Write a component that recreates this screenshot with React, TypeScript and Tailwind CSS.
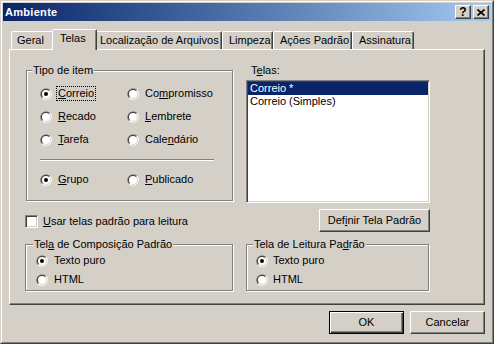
import React from 'react'

function Radio({ checked }: { checked?: boolean }) {
  return (
    <svg width="12" height="12" viewBox="0 0 12 12" className="shrink-0">
      <path d="M1.76 10.24A6 6 0 0 1 10.24 1.76Z" fill="#808080" />
      <path d="M1.76 10.24A6 6 0 0 0 10.24 1.76Z" fill="#ffffff" />
      <path d="M2.46 9.54A5 5 0 0 1 9.54 2.46Z" fill="#404040" />
      <path d="M2.46 9.54A5 5 0 0 0 9.54 2.46Z" fill="#d4d0c8" />
      <circle cx="6" cy="6" r="4" fill="#ffffff" />
      {checked && <circle cx="6" cy="6" r="2" fill="#000000" />}
    </svg>
  )
}

function Option({ checked, focused, children }: { checked?: boolean; focused?: boolean; children: React.ReactNode }) {
  return (
    <div className="flex items-center h-[23px]">
      <Radio checked={checked} />
      <span
        className={`ml-[4px] px-[1px] border leading-[13px] ${
          focused ? 'border-dotted border-black' : 'border-transparent'
        }`}
      >
        {children}
      </span>
    </div>
  )
}

function SmallOption({ checked, gap, children }: { checked?: boolean; gap: string; children: React.ReactNode }) {
  return (
    <div className="flex items-center h-[19px]">
      <Radio checked={checked} />
      <span className={`${gap} leading-[13px]`}>{children}</span>
    </div>
  )
}

function Group({ label, className, legendClass, children }: { label: React.ReactNode; className: string; legendClass: string; children: React.ReactNode }) {
  return (
    <fieldset className={`border border-[#808080] shadow-[inset_1px_1px_0_#fff,1px_1px_0_#fff] ${className}`}>
      <legend className={`${legendClass} px-[1px] leading-[13px] bg-[#d4d0c8]`}>{label}</legend>
      {children}
    </fieldset>
  )
}

function Button({ children, isDefault, className }: { children: React.ReactNode; isDefault?: boolean; className: string }) {
  return (
    <button
      className={`flex items-center justify-center bg-[#d4d0c8] leading-[13px] ${
        isDefault
          ? 'border border-black shadow-[inset_1px_1px_0_#fff,inset_-1px_-1px_0_#404040,inset_-2px_-2px_0_#808080]'
          : 'border border-t-white border-l-white border-r-[#404040] border-b-[#404040] shadow-[inset_-1px_-1px_0_#808080]'
      } ${className}`}
    >
      {children}
    </button>
  )
}

const tabs = [
  { label: 'Geral', w: 'w-[43px]', pl: 'pl-[5px]' },
  { label: 'Telas', w: 'w-[45px]', pl: 'pl-[7px]', selected: true },
  { label: 'Localização de Arquivos', w: 'w-[127px]', pl: 'pl-[4px]' },
  { label: 'Limpeza', w: 'w-[51px]', pl: 'pl-[6px]' },
  { label: 'Ações Padrão', w: 'w-[79px]', pl: 'pl-[6px]' },
  { label: 'Assinatura', w: 'w-[62px]', pl: 'pl-[6px]' },
]

export default function App() {
  return (
    <div className="w-[494px] h-[344px] bg-[#d4d0c8] text-[11px] text-black font-['Liberation_Sans',Arial,sans-serif] border border-t-[#d4d0c8] border-l-[#d4d0c8] border-r-[#404040] border-b-[#404040]">
      <div className="h-full flex flex-col p-[1px] border border-t-white border-l-white border-r-[#808080] border-b-[#808080]">
        {/* Title bar */}
        <div className="h-[18px] shrink-0 flex items-center pl-[2px] pr-[2px] bg-linear-to-r from-[#0a246a] to-[#a6caf0]">
          <span className="font-bold text-white tracking-[0.3px] leading-[13px]">Ambiente</span>
          <div className="ml-auto flex gap-[2px]">
            <div className="w-[16px] h-[14px] flex items-center justify-center border border-t-white border-l-white border-r-[#404040] border-b-[#404040] bg-[#d4d0c8] shadow-[inset_-1px_-1px_0_#808080]">
              <span className="font-bold text-[12px] leading-[12px]">?</span>
            </div>
            <div className="w-[16px] h-[14px] flex items-center justify-center border border-t-white border-l-white border-r-[#404040] border-b-[#404040] bg-[#d4d0c8] shadow-[inset_-1px_-1px_0_#808080]">
              <svg width="8" height="7" viewBox="0 0 8 7">
                <path d="M0.5 0.5L7.5 6.5M7.5 0.5L0.5 6.5" stroke="#000" strokeWidth="1.6" />
              </svg>
            </div>
          </div>
        </div>

        <div className="flex-1 px-[6px] pt-[8px]">
          {/* Tabs */}
          <div className="flex items-end h-[20px] pl-[2px]">
            {tabs.map((t) =>
              t.selected ? (
                <div
                  key={t.label}
                  className={`${t.w} ${t.pl} relative z-10 -mx-[2px] -mb-px h-[21px] pb-[3px] flex items-center bg-[#d4d0c8] rounded-t-[2px] border-t border-l border-r border-t-white border-l-white border-r-[#404040] shadow-[inset_-1px_0_0_#808080]`}
                >
                  <span className="leading-[13px] whitespace-nowrap">{t.label}</span>
                </div>
              ) : (
                <div
                  key={t.label}
                  className={`${t.w} ${t.pl} h-[18px] flex items-center rounded-t-[2px] border-t border-l border-r border-t-white border-l-white border-r-[#404040] shadow-[inset_-1px_0_0_#808080]`}
                >
                  <span className="leading-[13px] whitespace-nowrap">{t.label}</span>
                </div>
              )
            )}
          </div>

          {/* Panel */}
          <div className="h-[256px] pt-[14px] pl-[15px] border border-t-white border-l-white border-r-[#404040] border-b-[#404040] shadow-[inset_-1px_-1px_0_#808080]">
            <div className="grid grid-cols-[209px_184px] gap-x-[12px] gap-y-[6px] items-start">
              <Group label="Tipo de item" legendClass="ml-[5px]" className="ml-[1px] w-[207px] h-[137px]">
                <div className="pt-[5px] pl-[13px]">
                  <div className="grid grid-cols-[87px_auto]">
                    <Option checked focused>
                      <u>C</u>orreio
                    </Option>
                    <Option>
                      Co<u>m</u>promisso
                    </Option>
                    <Option>
                      <u>R</u>ecado
                    </Option>
                    <Option>
                      <u>L</u>embrete
                    </Option>
                    <Option>
                      <u>T</u>arefa
                    </Option>
                    <Option>
                      Cale<u>n</u>dário
                    </Option>
                  </div>
                  <div className="mt-[8px] w-[174px] border-t border-b border-t-[#808080] border-b-white" />
                  <div className="mt-[7px] grid grid-cols-[87px_auto]">
                    <Option checked>
                      <u>G</u>rupo
                    </Option>
                    <Option>
                      <u>P</u>ublicado
                    </Option>
                  </div>
                </div>
              </Group>

              <div>
                <div className="pl-[5px] leading-[13px]">
                  T<u>e</u>las:
                </div>
                <div className="mt-[3px] w-[184px] h-[123px] p-[1px] bg-white border border-t-[#808080] border-l-[#808080] border-r-white border-b-white shadow-[inset_1px_1px_0_#404040,inset_-1px_-1px_0_#d4d0c8]">
                  <div className="h-[13px] leading-[13px] pl-[2px] bg-[#0a246a] text-white">Correio *</div>
                  <div className="h-[13px] leading-[13px] pl-[2px]">Correio (Simples)</div>
                </div>
              </div>

              <div className="h-[23px] pt-[1px] flex items-center">
                <div className="w-[13px] h-[13px] bg-white border border-t-[#808080] border-l-[#808080] border-r-white border-b-white shadow-[inset_1px_1px_0_#404040,inset_-1px_-1px_0_#d4d0c8]" />
                <span className="ml-[5px] leading-[13px]">
                  <u>U</u>sar telas padrão para leitura
                </span>
              </div>

              <div className="flex justify-end">
                <Button className="w-[111px] h-[23px]">
                  Def<u>i</u>nir Tela Padrão
                </Button>
              </div>

              <Group
                label={
                  <>
                    Tel<u>a</u> de Composição Padrão
                  </>
                }
                legendClass="ml-[7px]"
                className="w-[208px] h-[53px]"
              >
                <div className="pl-[10px]">
                  <SmallOption checked gap="ml-[6px]">
                    Texto puro
                  </SmallOption>
                  <SmallOption gap="ml-[6px]">HTML</SmallOption>
                </div>
              </Group>

              <Group
                label={
                  <>
                    Tela de Leitura Pa<u>d</u>rão
                  </>
                }
                legendClass="ml-[6px]"
                className="w-[183px] h-[53px]"
              >
                <div className="pl-[9px]">
                  <SmallOption checked gap="ml-[5px]">
                    Texto puro
                  </SmallOption>
                  <SmallOption gap="ml-[5px]">HTML</SmallOption>
                </div>
              </Group>
            </div>
          </div>

          {/* Dialog buttons */}
          <div className="mt-[6px] flex justify-end gap-[6px]">
            <Button isDefault className="w-[75px] h-[23px]">
              OK
            </Button>
            <Button className="w-[75px] h-[23px]">Cancelar</Button>
          </div>
        </div>
      </div>
    </div>
  )
}
